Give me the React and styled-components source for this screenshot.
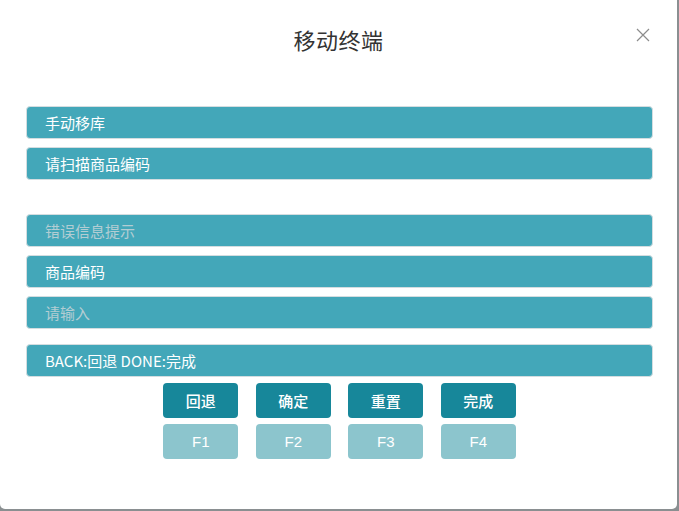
import React from "react";
import styled, { createGlobalStyle } from "styled-components";

const GlobalStyle = createGlobalStyle`
  html, body {
    margin: 0;
    padding: 0;
    background: #8a8f91;
  }
  body {
    font-family: "Noto Sans CJK SC", "Liberation Sans", sans-serif;
  }
`;

const Dialog = styled.div`
  width: 677px;
  height: 509px;
  background: #fff;
  border-radius: 0 0 5px 5px;
  box-sizing: border-box;
  position: relative;
`;

const Header = styled.div`
  height: 78px;
  display: flex;
  align-items: center;
  justify-content: center;
`;

const Title = styled.h2`
  margin: 0;
  font-size: 22px;
  font-weight: 400;
  color: #333;
  letter-spacing: 0.5px;
  line-height: 1;
`;

const Close = styled.button`
  position: absolute;
  top: 27px;
  right: 26px;
  width: 16px;
  height: 16px;
  padding: 0;
  border: 0;
  background: none;
  cursor: pointer;
`;

const Body = styled.div`
  padding: 28px 24px 0 26px;
  display: flex;
  flex-direction: column;
`;

const Group = styled.div`
  display: flex;
  flex-direction: column;
  gap: 8px;
  margin-bottom: ${(p) => p.$after || 0}px;
`;

const Bar = styled.div`
  height: 33px;
  box-sizing: border-box;
  background: #43a7b9;
  border: 1px solid #d4dde0;
  border-radius: 4px;
  display: flex;
  align-items: center;
  padding-left: 18px;
  font-size: 15px;
  font-weight: 400;
  color: ${(p) => (p.$placeholder ? "#b3cdd3" : "#fff")};
`;

const Keys = styled.div`
  display: grid;
  grid-template-columns: repeat(4, 75px);
  column-gap: 17.5px;
  row-gap: 6px;
  justify-content: center;
  margin-top: 6px;
`;

const Key = styled.button`
  height: 35px;
  border: 0;
  border-radius: 4px;
  background: ${(p) => (p.$muted ? "#8cc5cd" : "#17879a")};
  color: #fff;
  font-family: ${(p) =>
    p.$muted
      ? `"Liberation Sans", "Noto Sans CJK SC", sans-serif`
      : `"Noto Sans CJK SC", sans-serif`};
  font-size: 15px;
  font-weight: 500;
  padding: 0;
  cursor: pointer;
`;

const actions = ["回退", "确定", "重置", "完成"];
const fkeys = ["F1", "F2", "F3", "F4"];

export default function App() {
  return (
    <>
      <GlobalStyle />
      <Dialog>
        <Header>
          <Title>移动终端</Title>
        </Header>
        <Close aria-label="close">
          <svg width="16" height="16" viewBox="0 0 16 16">
            <path d="M2 2 L14 14 M14 2 L2 14" stroke="#8c8c8c" strokeWidth="1.2" fill="none" />
          </svg>
        </Close>
        <Body>
          <Group $after={34}>
            <Bar>手动移库</Bar>
            <Bar>请扫描商品编码</Bar>
          </Group>
          <Group $after={15}>
            <Bar $placeholder>错误信息提示</Bar>
            <Bar>商品编码</Bar>
            <Bar $placeholder>请输入</Bar>
          </Group>
          <Group>
            <Bar>BACK:回退 DONE:完成</Bar>
          </Group>
          <Keys>
            {actions.map((a) => (
              <Key key={a}>{a}</Key>
            ))}
            {fkeys.map((f) => (
              <Key key={f} $muted>
                {f}
              </Key>
            ))}
          </Keys>
        </Body>
      </Dialog>
    </>
  );
}
